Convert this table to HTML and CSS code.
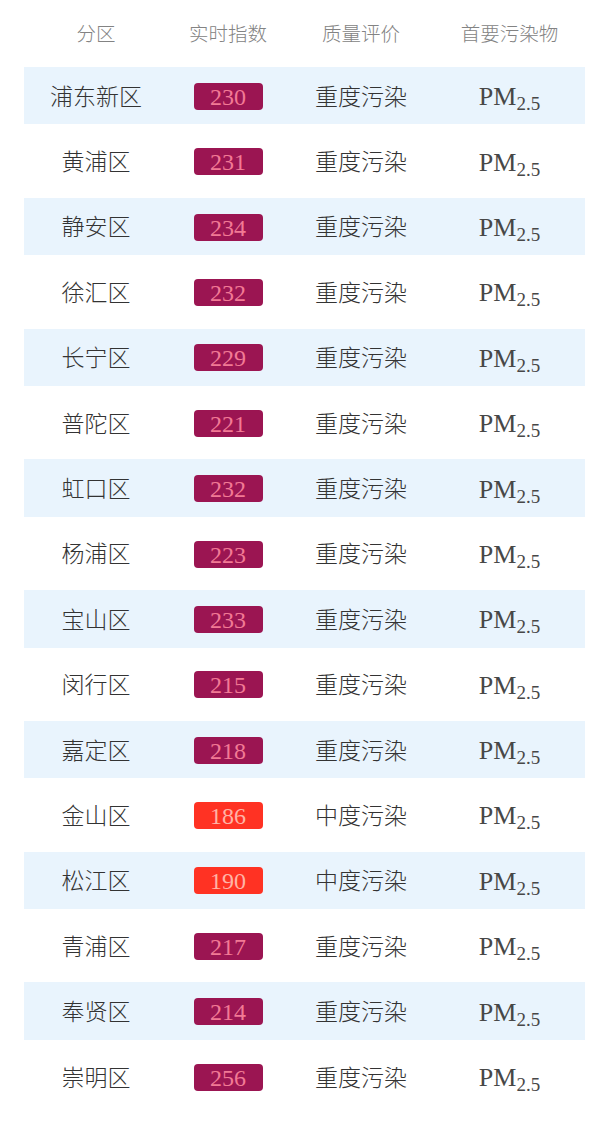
FILE: index.html
```html
<!DOCTYPE html>
<html lang="zh-CN">
<head>
<meta charset="utf-8">
<title>上海各区空气质量</title>
<link rel="stylesheet" href="styles.css">
</head>
<body>
<div class="table">
  <div class="row head">
    <div class="cell">分区</div>
    <div class="cell">实时指数</div>
    <div class="cell">质量评价</div>
    <div class="cell">首要污染物</div>
  </div>
  <div class="row stripe"><div class="cell">浦东新区</div><div class="cell"><span class="badge heavy">230</span></div><div class="cell">重度污染</div><div class="cell pm">PM<sub>2.5</sub></div></div>
  <div class="row"><div class="cell">黄浦区</div><div class="cell"><span class="badge heavy">231</span></div><div class="cell">重度污染</div><div class="cell pm">PM<sub>2.5</sub></div></div>
  <div class="row stripe"><div class="cell">静安区</div><div class="cell"><span class="badge heavy">234</span></div><div class="cell">重度污染</div><div class="cell pm">PM<sub>2.5</sub></div></div>
  <div class="row"><div class="cell">徐汇区</div><div class="cell"><span class="badge heavy">232</span></div><div class="cell">重度污染</div><div class="cell pm">PM<sub>2.5</sub></div></div>
  <div class="row stripe"><div class="cell">长宁区</div><div class="cell"><span class="badge heavy">229</span></div><div class="cell">重度污染</div><div class="cell pm">PM<sub>2.5</sub></div></div>
  <div class="row"><div class="cell">普陀区</div><div class="cell"><span class="badge heavy">221</span></div><div class="cell">重度污染</div><div class="cell pm">PM<sub>2.5</sub></div></div>
  <div class="row stripe"><div class="cell">虹口区</div><div class="cell"><span class="badge heavy">232</span></div><div class="cell">重度污染</div><div class="cell pm">PM<sub>2.5</sub></div></div>
  <div class="row"><div class="cell">杨浦区</div><div class="cell"><span class="badge heavy">223</span></div><div class="cell">重度污染</div><div class="cell pm">PM<sub>2.5</sub></div></div>
  <div class="row stripe"><div class="cell">宝山区</div><div class="cell"><span class="badge heavy">233</span></div><div class="cell">重度污染</div><div class="cell pm">PM<sub>2.5</sub></div></div>
  <div class="row"><div class="cell">闵行区</div><div class="cell"><span class="badge heavy">215</span></div><div class="cell">重度污染</div><div class="cell pm">PM<sub>2.5</sub></div></div>
  <div class="row stripe"><div class="cell">嘉定区</div><div class="cell"><span class="badge heavy">218</span></div><div class="cell">重度污染</div><div class="cell pm">PM<sub>2.5</sub></div></div>
  <div class="row"><div class="cell">金山区</div><div class="cell"><span class="badge medium">186</span></div><div class="cell">中度污染</div><div class="cell pm">PM<sub>2.5</sub></div></div>
  <div class="row stripe"><div class="cell">松江区</div><div class="cell"><span class="badge medium">190</span></div><div class="cell">中度污染</div><div class="cell pm">PM<sub>2.5</sub></div></div>
  <div class="row"><div class="cell">青浦区</div><div class="cell"><span class="badge heavy">217</span></div><div class="cell">重度污染</div><div class="cell pm">PM<sub>2.5</sub></div></div>
  <div class="row stripe"><div class="cell">奉贤区</div><div class="cell"><span class="badge heavy">214</span></div><div class="cell">重度污染</div><div class="cell pm">PM<sub>2.5</sub></div></div>
  <div class="row"><div class="cell">崇明区</div><div class="cell"><span class="badge heavy">256</span></div><div class="cell">重度污染</div><div class="cell pm">PM<sub>2.5</sub></div></div>
</div>
</body>
</html>
```

FILE: styles.css
```css
html, body {
  margin: 0;
  padding: 0;
  background: #ffffff;
}

body {
  font-family: "Liberation Serif", "Noto Sans CJK SC", serif;
  color: #333333;
}

.table {
  display: flex;
  flex-direction: column;
  gap: 8px;
  padding: 0 15px 0 24px;
}

.row {
  display: grid;
  grid-template-columns: 144px 120px 146px 151px;
  box-sizing: border-box;
  height: 57.4px;
  padding-top: 3px;
  align-items: center;
  font-size: 23px;
  font-weight: 300;
}

.row.head {
  height: 59px;
  padding-top: 10px;
  font-size: 19.5px;
  color: #838383;
  font-weight: 300;
}

.row.stripe {
  background: #e9f4fd;
}

.cell {
  text-align: center;
  line-height: 1;
  white-space: nowrap;
}

.badge {
  display: inline-block;
  width: 69px;
  height: 27px;
  line-height: 28px;
  margin-top: -4px;
  border-radius: 4px;
  font-family: "Liberation Serif", serif;
  font-size: 24px;
  font-weight: 400;
  vertical-align: middle;
}

.badge.heavy {
  background: #9b1552;
  color: #f27a95;
}

.badge.medium {
  background: #ff3223;
  color: #ffb3a6;
}

.pm {
  font-family: "Liberation Serif", serif;
  font-size: 26px;
  font-weight: 400;
  color: #474747;
}

.pm sub {
  font-size: 19px;
  vertical-align: -5px;
  line-height: 0;
}
```
